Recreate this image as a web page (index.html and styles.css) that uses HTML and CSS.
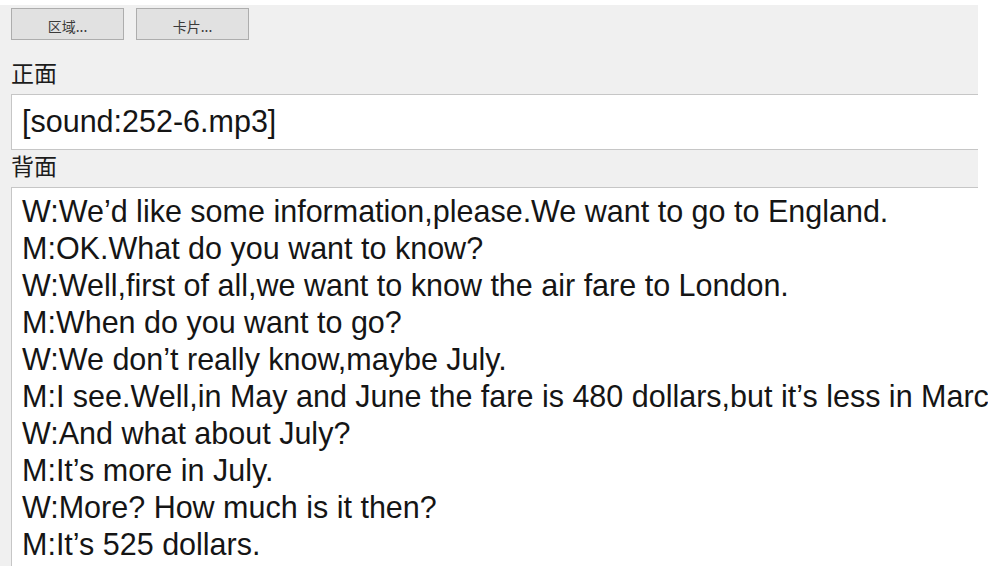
FILE: index.html
```html
<!DOCTYPE html>
<html lang="zh">
<head>
    <meta charset="UTF-8">
    <title>编辑</title>
    <link rel="stylesheet" href="styles.css">
</head>
<body>
    <div class="window">
        <div class="editor">
            <div class="toolbar">
                <button class="btn">区域...</button>
                <button class="btn">卡片...</button>
            </div>

            <div class="field-label">正面</div>
            <div class="field field-front">[sound:252-6.mp3]</div>

            <div class="field-label">背面</div>
            <div class="field field-back">
                <div>W:We’d like some information,please.We want to go to England.</div>
                <div>M:OK.What do you want to know?</div>
                <div>W:Well,first of all,we want to know the air fare to London.</div>
                <div>M:When do you want to go?</div>
                <div>W:We don’t really know,maybe July.</div>
                <div>M:I see.Well,in May and June the fare is 480 dollars,but it’s less in March.</div>
                <div>W:And what about July?</div>
                <div>M:It’s more in July.</div>
                <div>W:More? How much is it then?</div>
                <div>M:It’s 525 dollars.</div>
            </div>
        </div>
    </div>
</body>
</html>
```

FILE: styles.css
```css
body {
    margin: 0;
    background-color: #fff;
    font-family: "Liberation Sans", Arial, sans-serif;
    color: #151515;
}

.window {
    width: 988px;
    height: 566px;
    padding-top: 5px;
    box-sizing: border-box;
    overflow: hidden;
}

.editor {
    width: 978px;
    height: 561px;
    background-color: #f0f0f0;
    padding: 3px 0 0 11px;
    box-sizing: border-box;
    display: flex;
    flex-direction: column;
}

.toolbar {
    display: flex;
    gap: 12px;
}

.btn {
    width: 113px;
    height: 32px;
    padding: 3px 0 0;
    background-color: #e1e1e1;
    border: 1px solid #adadad;
    font-family: "Noto Sans CJK SC", sans-serif;
    font-size: 14px;
    color: #3a3a3a;
}

.field-label {
    margin: 17px 0 6px;
    font-family: "Noto Sans CJK SC", sans-serif;
    font-size: 23px;
    line-height: 31px;
    color: #1c1c1c;
}

.field-label + .field + .field-label {
    margin-top: 0;
}

.field {
    background-color: #fff;
    border: 1px solid #c6c6c6;
    border-right: none;
    font-size: 30.5px;
    line-height: 37px;
    padding-left: 10px;
    white-space: nowrap;
}

.field-front {
    padding-top: 8px;
    padding-bottom: 9px;
}

.field-back {
    flex: 1;
    padding-top: 5px;
    border-bottom: none;
}
```
